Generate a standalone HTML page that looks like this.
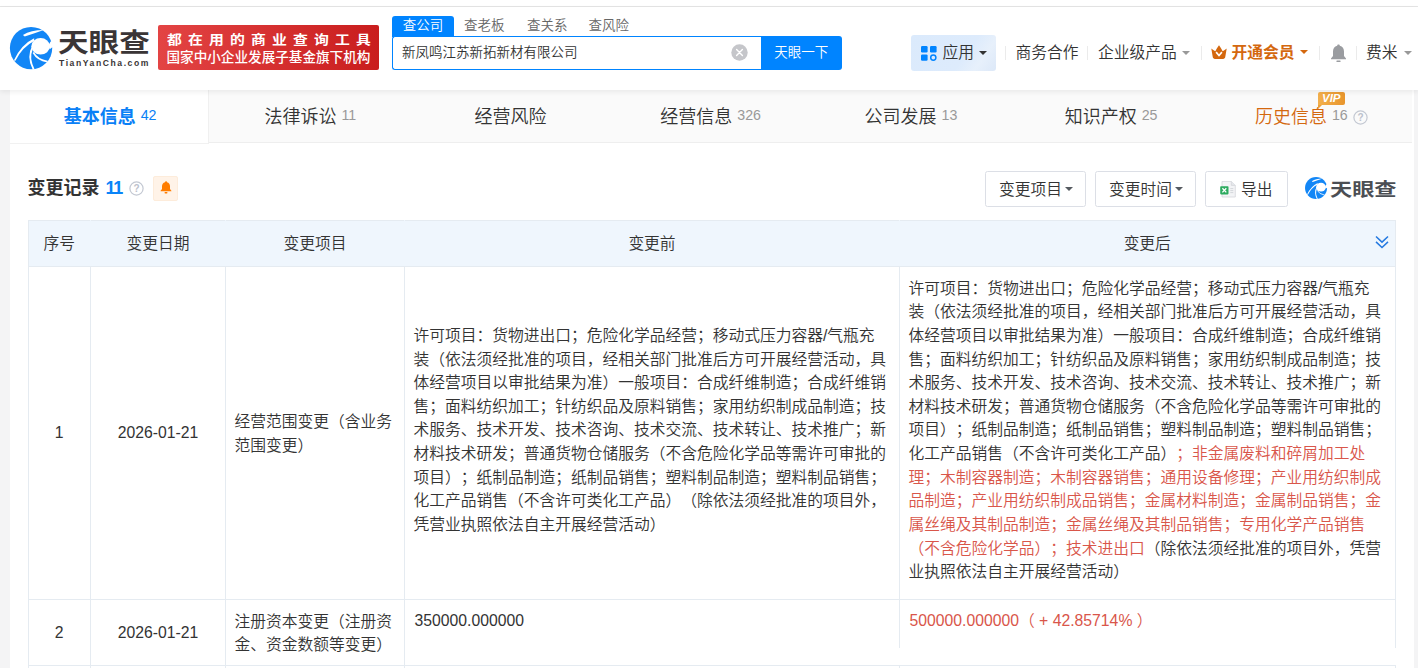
<!DOCTYPE html>
<html lang="zh-CN">
<head>
<meta charset="utf-8">
<title>天眼查</title>
<style>
*{box-sizing:border-box;margin:0;padding:0}
html,body{width:1418px;height:668px;overflow:hidden;background:#f4f4f5}
body{position:relative;font-weight:350;text-spacing-trim:space-all;font-family:"Liberation Sans","Noto Sans CJK SC",sans-serif;color:#333;font-size:15.75px}
.abs{position:absolute;white-space:nowrap}
/* header */
#topwhite{left:0;top:0;width:1418px;height:6px;background:#fff}
#topline{left:0;top:6px;width:1418px;height:1px;background:#e5e5e5}
#header{left:0;top:7px;width:1418px;height:83px;background:#fff;box-shadow:0 2px 5px rgba(0,0,0,.07);z-index:5}
#panel{left:10px;top:90px;width:1404px;height:578px;background:#fff}
#tabs{left:10px;top:90px;width:1401.5px;height:52.5px;background:#fafafa;border-bottom:1px solid #eee}
#tabact{left:10px;top:90px;width:199px;height:53.5px;background:#fff;border-right:1px solid #f0f0f0;border-bottom:1px solid #f1f1f1}
.tab{top:103.6px;height:26px;line-height:26px;font-size:18px;color:#333;text-align:center;width:200.2px}
.tab small{font-size:14.2px;color:#999;margin-left:5px;position:relative;top:-2.8px}
.sep{top:46px;width:1px;height:14px;background:#ebebeb;z-index:6}
.nav{top:40px;height:26px;line-height:26px;font-size:15.75px;color:#333;z-index:6}
.caret{width:0;height:0;border-left:4px solid transparent;border-right:4px solid transparent;border-top:4px solid #999;z-index:6}
.btn{top:171px;height:36px;border:1px solid #dcdfe6;border-radius:2.5px;background:#fff;line-height:35px;font-size:15.75px;color:#333}
table{border-collapse:collapse;table-layout:fixed}
td,th{border:1px solid #e5ebf1;font-weight:350;padding:0;font-size:15.75px;line-height:23.625px;color:#333;vertical-align:middle;white-space:nowrap}
th{background:#eff6fd;height:46px;text-align:center;border-left-color:#eff6fd;border-right-color:#eff6fd}
th:first-child{border-left-color:#e5ebf1}th:last-child{border-right-color:#e5ebf1}
td.c{text-align:center}
td.l{text-align:left;padding:1.5px 0 0 8.5px}
td.t{text-align:left;padding:0 0 5.5px 8.5px}
.red{color:#d9564a}
</style>
</head>
<body>
<div class="abs" id="topwhite"></div>
<div class="abs" id="topline"></div>
<div class="abs" id="panel"></div>
<div class="abs" id="tabs"></div>
<div class="abs" id="tabact"></div>
<div class="abs" id="header"></div>

<!-- LOGO -->
<svg class="abs" style="left:6px;top:23px;z-index:6" width="50" height="50" viewBox="0 0 668 668">
  <g>
  <circle cx="335" cy="335" r="283" fill="#1286f6"/>
  <ellipse cx="462" cy="312" rx="124" ry="110" fill="#fff"/>
  <path d="M566 300 L596 246 L640 236 L640 332 L619 325 L584 350 Z" fill="#fff"/>
  <path d="M226 160 Q330 92 504 92 Q372 140 250 180 Z" fill="#fff"/>
  <path d="M376 204 Q205 286 104 500 L126 506 Q217 322 376 242 Z" fill="#fff"/>
  <path d="M354 296 Q266 450 358 624 L380 616 Q308 460 354 364 Z" fill="#fff"/>
  <path d="M364 394 Q420 494 554 516" fill="none" stroke="#fff" stroke-width="21"/>
  </g>
</svg>
<div class="abs" id="logotxt" style="left:57.5px;top:20px;z-index:6;font-family:'Noto Sans CJK SC',sans-serif;font-weight:bold;font-size:29.4px;line-height:40px;color:#3a3536;transform:scale(1.04,.9);transform-origin:0 50%">天眼查</div>
<div class="abs" id="logosub" style="left:59px;top:57px;z-index:6;font-weight:bold;font-size:8.6px;line-height:12px;letter-spacing:1.56px;color:#3a3536">TianYanCha.com</div>

<!-- red slogan -->
<div class="abs" id="slogan" style="left:158px;top:25px;width:221px;height:45px;z-index:6;border-radius:2px;background:linear-gradient(90deg,#e34444,#c91d1d);color:#fff;font-family:'Noto Serif CJK SC','Liberation Serif',serif;font-weight:bold;font-size:13.5px">
  <div class="abs" style="left:8.5px;top:5px;line-height:18px;font-family:'Noto Sans CJK SC',sans-serif;font-size:12.6px;letter-spacing:5.2px;transform:scaleX(1.18);transform-origin:0 50%">都在用的商业查询工具</div>
  <div class="abs" style="left:8.5px;top:24px;line-height:18px;font-size:13.6px;font-family:'Liberation Sans','Noto Sans CJK SC',sans-serif;font-weight:500">国家中小企业发展子基金旗下机构</div>
</div>

<!-- search -->
<div class="abs" style="left:392px;top:16px;width:62px;height:21px;background:#0084ff;border-radius:3px 3px 0 0;z-index:6;color:#fff;font-size:13.5px;line-height:19px;text-align:center">查公司</div>
<div class="abs" style="left:464px;top:16px;z-index:6;color:#666;font-size:13.5px;line-height:19px">查老板</div>
<div class="abs" style="left:527px;top:16px;z-index:6;color:#666;font-size:13.5px;line-height:19px">查关系</div>
<div class="abs" style="left:588.5px;top:16px;z-index:6;color:#666;font-size:13.5px;line-height:19px">查风险</div>
<div class="abs" style="left:392px;top:36px;width:370px;height:34px;border:1px solid #0084ff;border-right:none;border-radius:3px 0 0 3px;background:#fff;z-index:6;font-size:13.5px;line-height:32px;padding-left:9px;color:#333">新凤鸣江苏新拓新材有限公司</div>
<svg class="abs" style="left:731px;top:43.5px;z-index:7" width="17" height="17" viewBox="0 0 17 17"><circle cx="8.5" cy="8.5" r="8.2" fill="#c5c6ca"/><path d="M5.6 5.6l5.8 5.8M11.4 5.6l-5.8 5.8" stroke="#fff" stroke-width="1.4" stroke-linecap="round"/></svg>
<div class="abs" style="left:761px;top:36px;width:80.5px;height:34px;background:#0084ff;border-radius:0 3px 3px 0;z-index:6;color:#fff;font-size:13.5px;line-height:33px;text-align:center">天眼一下</div>

<!-- right nav -->
<div class="abs" style="left:911px;top:35px;width:85px;height:36px;background:linear-gradient(125deg,#dbeafc 0%,#ddebfc 62%,#e7f0fb 80%,#dce8f8 100%);border-radius:3px;z-index:6"></div>
<svg class="abs" style="left:921px;top:45.5px;z-index:7" width="16" height="15" viewBox="0 0 16 15">
  <rect x="0" y="0" width="6.6" height="6.4" rx="1.2" fill="#0084ff"/>
  <rect x="9" y="0" width="6.6" height="6.4" rx="1.2" fill="#0084ff"/>
  <rect x="0" y="8.4" width="6.6" height="6.4" rx="1.2" fill="#0084ff"/>
  <circle cx="12.3" cy="11.6" r="2.6" fill="none" stroke="#0084ff" stroke-width="1.5"/>
</svg>
<div class="abs nav" style="left:942.5px">应用</div>
<div class="abs caret" style="left:979px;top:51px;border-top-color:#333"></div>
<div class="abs sep" style="left:1005px"></div>
<div class="abs nav" style="left:1015.5px">商务合作</div>
<div class="abs sep" style="left:1087px"></div>
<div class="abs nav" style="left:1098px">企业级产品</div>
<div class="abs caret" style="left:1181.5px;top:50.5px"></div>
<div class="abs sep" style="left:1201px"></div>
<svg class="abs" style="left:1211px;top:44.9px;z-index:7" width="16" height="14.1" viewBox="0 0 16 13.5" preserveAspectRatio="none">
  <path d="M0.3 3.4 C1.5 4.2 3.2 5.6 4.4 6 C5.2 4.2 6.6 1.8 8 0.2 C9.4 1.8 10.8 4.2 11.6 6 C12.8 5.6 14.5 4.2 15.7 3.4 L14.3 11.3 C14.1 12.6 13.3 13.3 12 13.3 H4 C2.7 13.3 1.9 12.6 1.7 11.3 Z" fill="#d4680f"/>
  <path d="M5.1 6.9 L8 10.1 L10.9 6.9" fill="none" stroke="#fff" stroke-width="1.7"/>
</svg>
<div class="abs nav" style="left:1231.5px;color:#d4680f;font-weight:bold">开通会员</div>
<div class="abs caret" style="left:1299.5px;top:49.5px;border-top-color:#d4680f"></div>
<div class="abs sep" style="left:1319px"></div>
<svg class="abs" style="left:1330px;top:43.5px;z-index:7" width="17" height="19" viewBox="0 0 17 19">
  <path d="M8.5 0.5 C9.3 0.5 9.8 1 9.8 1.8 C12.6 2.5 14 4.8 14 7.6 V12 L16 14.6 V15.2 H1 V14.6 L3 12 V7.6 C3 4.8 4.4 2.5 7.2 1.8 C7.2 1 7.7 0.5 8.5 0.5 Z" fill="#9a9ca0"/>
  <rect x="6.3" y="16.4" width="4.4" height="1.6" rx=".8" fill="#9a9ca0"/>
</svg>
<div class="abs sep" style="left:1356px"></div>
<div class="abs nav" style="left:1366px">费米</div>
<div class="abs caret" style="left:1403.5px;top:50.5px"></div>

<!-- tabs -->
<div class="abs tab" style="left:10px;color:#0a80f6;font-weight:bold">基本信息<small style="color:#0a80f6;font-weight:normal">42</small></div>
<div class="abs tab" style="left:210.2px">法律诉讼<small>11</small></div>
<div class="abs tab" style="left:410.4px">经营风险</div>
<div class="abs tab" style="left:610.6px">经营信息<small>326</small></div>
<div class="abs tab" style="left:810.8px">公司发展<small>13</small></div>
<div class="abs tab" style="left:1011px">知识产权<small>25</small></div>
<div class="abs tab" style="left:1211.2px;color:#d4680f">历史信息<small>16</small><svg style="vertical-align:-2px;margin-left:5px" width="15" height="15" viewBox="0 0 15 15"><circle cx="7.5" cy="7.5" r="6.6" fill="none" stroke="#c3c8d2" stroke-width="1.2"/><text x="7.5" y="11.1" font-size="10" font-weight="bold" text-anchor="middle" fill="#bcc1cc" font-family="Liberation Sans,sans-serif">?</text></svg></div>
<div class="abs" id="vip" style="left:1317.5px;top:92px;width:27.5px;height:13px;background:linear-gradient(90deg,#f3b04d,#e8952c);border-radius:2px 2px 2px 0;color:#fff;font-size:11.5px;line-height:13px;font-weight:bold;font-style:italic;text-align:center;z-index:4">VIP</div>
<div class="abs" style="left:1317.5px;top:105px;width:0;height:0;border-top:4px solid #eaa03c;border-right:4px solid transparent;z-index:4"></div>

<!-- section title -->
<div class="abs" style="left:27.5px;top:175px;font-size:18px;line-height:27px;font-weight:bold;color:#333">变更记录</div>
<div class="abs" style="left:105.6px;top:175.3px;font-size:18px;line-height:27px;font-weight:bold;color:#0a84f8;letter-spacing:-1.3px">11</div>
<svg class="abs" style="left:129.3px;top:180.6px" width="15" height="15" viewBox="0 0 15 15"><circle cx="7.5" cy="7.5" r="6.6" fill="none" stroke="#c3c8d2" stroke-width="1.2"/><text x="7.5" y="11.1" font-size="10" font-weight="bold" text-anchor="middle" fill="#bcc1cc" font-family="Liberation Sans,sans-serif">?</text></svg>
<div class="abs" style="left:153px;top:176px;width:24.5px;height:24.5px;background:#fff3e8;border:1px solid #fdecdb;border-radius:2px"></div>
<svg class="abs" style="left:159.8px;top:181px" width="12" height="13" viewBox="0 0 12 13">
  <path d="M6 0.3 C6.6 0.3 7 0.7 7 1.2 C9 1.7 10 3.3 10 5.3 V8 L11.4 9.8 V10.2 H0.6 V9.8 L2 8 V5.3 C2 3.3 3 1.7 5 1.2 C5 0.7 5.4 0.3 6 0.3 Z" fill="#ff7d00"/>
  <rect x="4.5" y="11" width="3" height="1.4" rx=".7" fill="#ff7d00"/>
</svg>

<!-- toolbar buttons -->
<div class="abs btn" style="left:985px;width:101px;padding-left:13px">变更项目</div>
<div class="abs caret" style="left:1065px;top:187px;border-top-color:#555a60;z-index:2"></div>
<div class="abs btn" style="left:1095px;width:101px;padding-left:13px">变更时间</div>
<div class="abs caret" style="left:1175px;top:187px;border-top-color:#555a60;z-index:2"></div>
<div class="abs btn" style="left:1205px;width:83px;padding-left:35px">导出</div>
<svg class="abs" style="left:1220px;top:180.8px;z-index:2" width="16" height="17" viewBox="0 0 16 17">
  <path d="M2 0.4 H11.3 L15.3 4.4 V16 H2 Z" fill="#f3f4f6" stroke="#d4d6db" stroke-width=".8"/>
  <path d="M11.3 0.4 V4.4 H15.3" fill="#e6e8eb" stroke="#d4d6db" stroke-width=".8"/>
  <rect x="0.2" y="5.2" width="8.3" height="8.2" rx=".8" fill="#2dab5f"/>
  <path d="M2.4 7.2l3.9 4.2M6.3 7.2l-3.9 4.2" stroke="#fff" stroke-width="1.3"/>
  <path d="M10.3 7.6h3M10.3 9.6h3M10.3 11.6h3" stroke="#cfd2d6" stroke-width=".9"/>
</svg>
<!-- small logo -->
<svg class="abs" style="left:1303.4px;top:175.4px" width="26" height="26" viewBox="0 0 668 668"><g>
  <circle cx="335" cy="335" r="283" fill="#1286f6"/>
  <ellipse cx="462" cy="312" rx="124" ry="110" fill="#fff"/>
  <path d="M566 300 L596 246 L640 236 L640 332 L619 325 L584 350 Z" fill="#fff"/>
  <path d="M226 160 Q330 92 504 92 Q372 140 250 180 Z" fill="#fff"/>
  <path d="M376 204 Q205 286 104 500 L126 506 Q217 322 376 242 Z" fill="#fff"/>
  <path d="M354 296 Q266 450 358 624 L380 616 Q308 460 354 364 Z" fill="#fff"/>
  <path d="M364 394 Q420 494 554 516" fill="none" stroke="#fff" stroke-width="21"/>
  </g></svg>
<div class="abs" id="logotxt2" style="left:1330px;top:172px;font-family:'Noto Sans CJK SC',sans-serif;font-weight:bold;font-size:22.2px;line-height:32px;color:#4b4e53;transform:scaleY(.8);transform-origin:0 50%">天眼查</div>

<!-- table -->
<table class="abs" style="left:27.5px;top:220px;width:1367px">
<colgroup><col style="width:62.5px"><col style="width:135px"><col style="width:179px"><col style="width:495px"><col style="width:495.5px"></colgroup>
<tr><th>序号</th><th>变更日期</th><th>变更项目</th><th>变更前</th><th>变更后</th></tr>
<tr style="height:333px">
<td class="c">1</td><td class="c">2026-01-21</td>
<td class="l">经营范围变更（含业务<br>范围变更）</td>
<td class="t">许可项目：货物进出口；危险化学品经营；移动式压力容器/气瓶充<br>装（依法须经批准的项目，经相关部门批准后方可开展经营活动，具<br>体经营项目以审批结果为准）一般项目：合成纤维制造；合成纤维销<br>售；面料纺织加工；针纺织品及原料销售；家用纺织制成品制造；技<br>术服务、技术开发、技术咨询、技术交流、技术转让、技术推广；新<br>材料技术研发；普通货物仓储服务（不含危险化学品等需许可审批的<br>项目）；纸制品制造；纸制品销售；塑料制品制造；塑料制品销售；<br>化工产品销售（不含许可类化工产品）（除依法须经批准的项目外，<br>凭营业执照依法自主开展经营活动）</td>
<td class="t">许可项目：货物进出口；危险化学品经营；移动式压力容器/气瓶充<br>装（依法须经批准的项目，经相关部门批准后方可开展经营活动，具<br>体经营项目以审批结果为准）一般项目：合成纤维制造；合成纤维销<br>售；面料纺织加工；针纺织品及原料销售；家用纺织制成品制造；技<br>术服务、技术开发、技术咨询、技术交流、技术转让、技术推广；新<br>材料技术研发；普通货物仓储服务（不含危险化学品等需许可审批的<br>项目）；纸制品制造；纸制品销售；塑料制品制造；塑料制品销售；<br>化工产品销售（不含许可类化工产品）<span class="red">；非金属废料和碎屑加工处<br>理；木制容器制造；木制容器销售；通用设备修理；产业用纺织制成<br>品制造；产业用纺织制成品销售；金属材料制造；金属制品销售；金<br>属丝绳及其制品制造；金属丝绳及其制品销售；专用化学产品销售<br>（不含危险化学品）；技术进出口</span>（除依法须经批准的项目外，凭营<br>业执照依法自主开展经营活动）</td>
</tr>
<tr style="height:66px">
<td class="c">2</td><td class="c">2026-01-21</td>
<td class="l">注册资本变更（注册资<br>金、资金数额等变更）</td>
<td class="t" style="vertical-align:top;padding:9px 0 0 9.5px">350000.000000</td>
<td class="t red" style="vertical-align:top;padding:9px 0 0 9.5px"><span class="red">500000.000000（ + 42.85714% ）</span></td>
</tr>
<tr style="height:20px"><td></td><td></td><td></td><td></td><td></td></tr>
</table>
<svg class="abs" style="left:1375.1px;top:235px" width="14" height="14" viewBox="0 0 14 14"><path d="M1 1.5l6 5.6 6-5.6M1 6.9l6 5.6 6-5.6" fill="none" stroke="#2479e0" stroke-width="1.5"/></svg>
<!-- screenshot stitch patch -->
<div class="abs" style="left:898px;top:648px;width:500px;height:17px;background:#fff"></div>
</body>
</html>
